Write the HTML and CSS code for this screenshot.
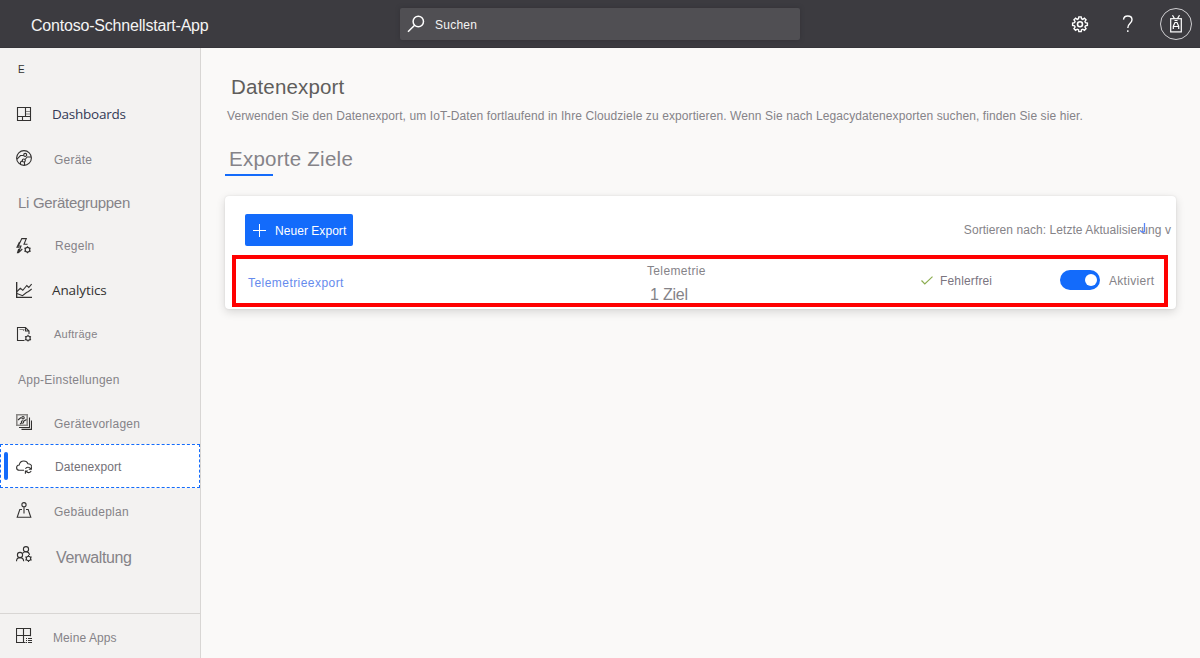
FILE: index.html
```html
<!DOCTYPE html>
<html lang="de">
<head>
<meta charset="utf-8">
<title>Datenexport</title>
<link rel="stylesheet" href="styles.css">
</head>
<body>
<header class="topbar">
  <div class="brand">Contoso-Schnellstart-App</div>
  <div class="search">
    <svg class="search-icon" width="18" height="18" viewBox="0 0 18 18"><circle cx="11.3" cy="6.5" r="5.2"/><path d="M7.6 10.2L1 16.7"/></svg>
    <span>Suchen</span>
  </div>
  <div class="tools">
    <svg class="gear" width="18" height="18" viewBox="0 0 18 18"><path d="M7.7 1.2h2.6l.4 2.1 1.4.6 1.8-1.2 1.8 1.8-1.2 1.8.6 1.4 2.1.4v2.6l-2.1.4-.6 1.4 1.2 1.8-1.8 1.8-1.8-1.2-1.4.6-.4 2.1H7.7l-.4-2.1-1.4-.6-1.8 1.2-1.8-1.8 1.2-1.8-.6-1.4-2.1-.4V8.1l2.1-.4.6-1.4-1.2-1.8 1.8-1.8 1.8 1.2 1.4-.6z" transform="translate(.9 .8) scale(.9)"/><circle cx="9" cy="9.200" r="2.500"/></svg>
    <svg class="help" width="12" height="18" viewBox="0 0 12 18"><path d="M1.5 4.6C1.7 2.2 3.4 1 5.7 1c2.5 0 4.3 1.3 4.3 3.7C10 8.400 5.800 8 5.800 13"/><path d="M5.800 15.300v1.700"/></svg>
    <div class="avatar"><svg width="12" height="18" viewBox="0 0 12 18"><rect x=".7" y="3.700" width="10.600" height="13.200"/><path d="M2.500.3l2 3.300M9.500.3l-2 3.300M4.500 5.500h3M3.300 14v-2.800L5 7.500h2l1.700 3.700V14M3.500 11.500h5"/></svg></div>
  </div>
</header>
<div class="body">
  <nav class="nav">
    <div class="nav-mark">E</div>
    <a class="item dash"><svg viewBox="0 0 16 16"><path d="M1.500 1.500h13v13h-13zM1.500 10.500h13M9.500 1.500v9M6.500 10.500v4"/><path class="soft" d="M10 5.500h4M10 8h4"/></svg><span>Dashboards</span></a>
    <a class="item devices"><svg viewBox="0 0 16 16"><circle cx="8" cy="8" r="7.400"/><circle cx="9.200" cy="4.900" r="1.500"/><circle cx="7.800" cy="10.500" r="1.500"/><path d="M1 9.200l3.500-3.700h3.200M4.500 14.500V12l2-1.200M9 9.500l2.200-2.500h4M8.500 12v3.300"/></svg><span>Geräte</span></a>
    <div class="section groups">Li Gerätegruppen</div>
    <a class="item rules"><svg viewBox="0 0 16 16"><path d="M11.500 6.300H8L10.300.6H5.800L2.300 8H5L2.300 14.800l4-3.800M3.500 4L1 9.200h2.500M2.300 14.800H1.500l1.200-4"/><circle cx="11.500" cy="11.700" r="2.300"/><path d="M11.500 8.200v1.300M11.500 13.900v1.300M8.400 10l1.100.6M13.500 12.800l1.100.6M8.400 13.400l1.100-.6M13.500 10.600l1.100-.6"/></svg><span>Regeln</span></a>
    <a class="item analytics"><svg viewBox="0 0 16 16"><path class="axis" d="M.6 0v15.400H16"/><path d="M1 9.500l3.300-3.200 2.500 2 4-4.800 2 2L15.600 2M1 11.500l5.500 2.200 4-3.200 2-1 3.200-2.500"/></svg><span>Analytics</span></a>
    <a class="item jobs"><svg viewBox="0 0 16 16"><path d="M8.500 14.500h-7v-13h8l3.500 3.500V8M9.500 1.500V5H13"/><path class="soft" d="M3.500 3.500h5M7.500 3v2"/><circle cx="12" cy="12.200" r="2.200"/><path d="M12 8.800v1.200M12 14.400v1.200M9 10.500l1.100.6M13.900 13.300l1.100.6M9 13.900l1.100-.6M13.900 11.100l1.100-.6"/></svg><span>Aufträge</span></a>
    <div class="section settings">App-Einstellungen</div>
    <a class="item templates"><svg viewBox="0 0 16 16"><path class="soft thick" d="M.8.8h10.400v10.400H.8z"/><path d="M3 13.500h10.500V3.500M5.500 15.400h10V6.500M2 6l3-2.500M4 10l1.500-1M8 7l2.500-1.500"/><circle cx="7" cy="3.700" r="1.200"/><circle cx="6.500" cy="8" r="1.200"/></svg><span>Gerätevorlagen</span></a>
    <a class="item export active"><svg viewBox="0 0 16 16"><path d="M8 12.300H3.500C1.700 12.300.6 11.200.6 9.700c0-1.600 1.100-2.600 2.600-2.700C3.700 4.500 5.300 3 7.800 3c2 0 3.500 1 4.100 2.700 2.100 0 3.500 1 3.700 2.900"/><path d="M9.500 10.900c.8-2 3.800-2.300 5.200-.1M15.400 8.500v2.700h-2.600M15.200 12.900c-.9 2.200-3.800 2.400-5.200.3M9.400 15.700V13H12"/></svg><span>Datenexport</span></a>
    <a class="item plan"><svg viewBox="0 0 16 16"><circle cx="8" cy="2.700" r="2.100"/><path d="M8 4.800V11.500M6 7.500H3.800L1.200 15.300h13.600l-2.600-7.800H10"/></svg><span>Gebäudeplan</span></a>
    <a class="item admin"><svg viewBox="0 0 16 16"><circle cx="10" cy="3.200" r="2.600"/><circle cx="4" cy="9" r="2.600"/><path d="M.5 15.300c0-2.300 1.500-3.700 3.500-3.700s3.500 1.400 3.700 3.700M6.500 7.500C7.300 6.300 8.500 5.800 10 5.800c1.900 0 3.200 1.100 3.600 3"/><circle cx="12.500" cy="12.500" r="2.200"/><path d="M12.500 9.100v1.200M12.500 14.700v1.200M9.400 10.800l1.100.6M14.500 13.600l1.100.6M9.400 14.200l1.100-.6M14.500 11.400l1.100-.6"/></svg><span>Verwaltung</span></a>
    <a class="item apps"><svg viewBox="0 0 16 16"><path d="M9.500 14.500h-9V.5h14v7.800M.5 7.500h14M7.500.5v14M10 10.500h1M12 10.500h4M10 12.500h1M12 12.500h4M10 14.500h1M12 14.500h4"/></svg><span>Meine Apps</span></a>
  </nav>
  <main class="main">
    <h1 class="title">Datenexport</h1>
    <p class="desc">Verwenden Sie den Datenexport, um IoT-Daten fortlaufend in Ihre Cloudziele zu exportieren. Wenn Sie nach Legacydatenexporten suchen, finden Sie sie hier.</p>
    <div class="tabs">Exporte Ziele</div>
    <section class="card">
      <div class="toolbar">
        <button class="new"><svg width="13" height="13" viewBox="0 0 13 13"><path d="M6.500 0v13M0 6.500h13"/></svg><span>Neuer Export</span></button>
        <div class="sort">Sortieren nach: Letzte Aktualisierung v<svg class="arrow" width="6" height="10" viewBox="0 0 6 10"><path d="M4.500 0v9M0 7.500l2 1.500h2.500"/></svg></div>
      </div>
      <div class="row">
        <a class="name">Telemetrieexport</a>
        <div class="kind"><div class="type">Telemetrie</div><div class="count">1 Ziel</div></div>
        <div class="health"><svg width="12" height="9" viewBox="0 0 12 9"><path d="M.5 4.500l3.300 3.500L11.500.6"/></svg><span>Fehlerfrei</span></div>
        <div class="state"><div class="toggle"><i class="knob"></i></div><span>Aktiviert</span></div>
      </div>
    </section>
  </main>
</div>
</body>
</html>
```

FILE: styles.css
```css
* { box-sizing: border-box; }
body { margin: 0; width: 1200px; height: 658px; overflow: hidden; background: #faf9f8; color: #858388; font: 12px/16px "Liberation Sans", Arial, sans-serif; letter-spacing: .25px; }
svg { display: block; flex: none; fill: none; stroke: currentColor; }
span, .brand, .section, .sort, .desc, .title { white-space: nowrap; }

.topbar { height: 48px; display: flex; align-items: center; background: #3c3b40; color: #fff; border-bottom: 1px solid #36353a; }
.brand { width: 400px; padding: 4px 0 0 31px; font-size: 16px; letter-spacing: -.2px; color: #f4f4f4; }
.search { width: 400px; height: 32px; display: flex; align-items: center; gap: 10px; padding-left: 7px; background: #504f53; border-radius: 2px; box-shadow: 0 0 4px #333237; }
.search span { padding-top: 2px; color: #f4f4f4; }
.search-icon { stroke-width: 1.500; }
.tools { flex: 1; display: flex; align-items: center; padding-left: 271px; }
.help { margin-left: 33px; stroke-width: 1.400; }
.gear { stroke-width: 1.600; }
.avatar { width: 32px; height: 32px; margin-left: 26px; display: grid; place-items: center; border: 1px solid #d0cfd2; border-radius: 50%; }
.avatar svg { stroke-width: 1.200; }

.body { display: flex; height: 610px; }
.nav { width: 201px; flex: none; display: flex; flex-direction: column; background: #f3f2f1; border-right: 1px solid #d8d6d4; }
.nav-mark { height: 44px; padding: 14px 0 0 18px; font-size: 10px; color: #323130; }
.item { height: 44px; display: flex; align-items: center; padding-left: 16px; }
.item svg { width: 16px; height: 16px; color: #323130; stroke-width: 1.100; }
.item .soft { stroke: #8a8886; }
.item .thick { stroke-width: 1.600; }
.item .axis { stroke-width: 1.500; }
.item span { margin-left: 22px; }
.section { padding-left: 18px; }
.dash span, .analytics span { margin-left: 20px; color: #323130; font: 13.5px/18px "Open Sans", "Noto Sans", sans-serif; letter-spacing: -.25px; }
.analytics span { letter-spacing: -.1px; }
.dash span { color: #333a56; }
.devices span { padding-top: 4px; }
.groups { height: 44px; padding-top: 15px; font-size: 15px; letter-spacing: -.3px; }
.rules span { margin-left: 23px; }
.jobs span { font-size: 11px; }
.settings { height: 46px; padding-top: 16px; }
.templates { height: 42px; }
.templates svg { margin-top: -2px; }
.templates span { padding-top: 2px; }
.active { background: #fff; border: 1px dashed #136bfb; position: relative; padding-left: 15px; width: 200px; color: #737177; }
.active span { margin-left: 23px; padding-top: 2px; letter-spacing: .1px; }
.active::before { content: ""; position: absolute; left: 3px; top: 7px; width: 4px; height: 28px; border-radius: 2px; background: #136bfb; }
.plan span { padding-top: 3px; }
.admin span { margin-left: 24px; padding-top: 8px; font-size: 16px; letter-spacing: -.35px; }
.apps { margin-top: auto; height: 45px; border-top: 1px solid #d8d6d4; }
.apps span { margin-left: 21px; padding-top: 3px; letter-spacing: .1px; }

.main { flex: 1; padding: 27px 24px 0; }
.title { margin: 0 0 0 6px; font-size: 20.5px; line-height: 24px; font-weight: 400; color: #605e5c; letter-spacing: .15px; }
.desc { margin: 9px 0 0 2px; letter-spacing: .097px; }
.tabs { width: 48px; height: 31px; margin-top: 21px; padding-left: 4px; border-bottom: 2px solid #136bfb; font-size: 20.5px; line-height: 28px; letter-spacing: .25px; white-space: nowrap; }
.card { width: 951px; height: 113px; margin-top: 20px; padding: 18px 5px 0 7px; background: #fff; border-radius: 4px; box-shadow: 0 3px 10px rgba(0,0,0,.14), 0 0 2px rgba(0,0,0,.1); }
.toolbar { display: flex; justify-content: space-between; padding-left: 13px; }
.new { width: 108px; height: 32px; border: 0; border-radius: 2px; display: flex; align-items: center; gap: 9px; padding: 0 0 0 8px; background: #136bfb; color: #fff; font: inherit; letter-spacing: .05px; }
.new span { padding-top: 1px; }
.sort { position: relative; padding-top: 8px; letter-spacing: .06px; }
.arrow { position: absolute; right: 25px; top: 9px; }
.arrow path { stroke: #5884f5; stroke-width: 1.300; }
.row { width: 936px; height: 52px; margin-top: 9px; display: grid; grid-template-columns: 399px 274px 139px 1fr; align-items: center; padding-left: 12px; border: 4px solid #f00; }
.name { color: #668bed; padding-top: 3px; letter-spacing: .45px; }
.type { padding-top: 4px; letter-spacing: .35px; }
.count { padding: 8px 0 0 3px; font-size: 16px; letter-spacing: -.2px; }
.health, .state { display: flex; align-items: center; }
.health { gap: 7px; letter-spacing: .15px; color: #7b757f; }
.health svg { color: #8cad50; stroke-width: 1.200; margin-top: -1px; }
.toggle { width: 40px; height: 20px; margin-top: -2px; padding: 4px 3px; display: flex; justify-content: flex-end; border-radius: 10px; background: #136bfb; }
.knob { width: 12px; height: 12px; border-radius: 50%; background: #fff; }
.state { gap: 9px; letter-spacing: .3px; }
```
